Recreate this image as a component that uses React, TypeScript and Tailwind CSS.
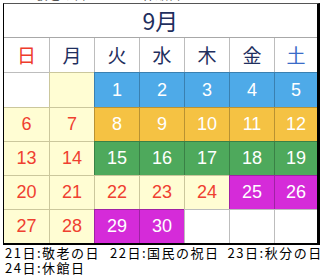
import React from "react";

type Kind = "white" | "cream" | "blue" | "orange" | "green" | "purple";

const cellStyle: Record<Kind, string> = {
  white: "bg-white text-[#ee3b2b] border-[#bdbdbd]",
  cream: "bg-[#fffdd3] text-[#ef4030] border-[#cbc79c]",
  blue: "bg-[#4eaae8] text-white border-[#3a80b0]",
  orange: "bg-[#f5c243] text-white border-[#b99232]",
  green: "bg-[#4ea95c] text-white border-[#3a8046]",
  purple: "bg-[#d52bd9] text-white border-[#a021a4]",
};

const weeks: [string, Kind][][] = [
  [["", "white"], ["", "cream"], ["1", "blue"], ["2", "blue"], ["3", "blue"], ["4", "blue"], ["5", "blue"]],
  [["6", "cream"], ["7", "cream"], ["8", "orange"], ["9", "orange"], ["10", "orange"], ["11", "orange"], ["12", "orange"]],
  [["13", "cream"], ["14", "cream"], ["15", "green"], ["16", "green"], ["17", "green"], ["18", "green"], ["19", "green"]],
  [["20", "cream"], ["21", "cream"], ["22", "cream"], ["23", "cream"], ["24", "cream"], ["25", "purple"], ["26", "purple"]],
  [["27", "cream"], ["28", "cream"], ["29", "purple"], ["30", "purple"], ["", "white"], ["", "white"], ["", "white"]],
];

const rowHeights = ["h-[35px]", "h-[34px]", "h-[34px]", "h-[34px]", "h-[34px]"];

const days = [
  { label: "日", color: "text-[#ee3b2b]" },
  { label: "月", color: "text-[#1f2f5e]" },
  { label: "火", color: "text-[#1f2f5e]" },
  { label: "水", color: "text-[#1f2f5e]" },
  { label: "木", color: "text-[#1f2f5e]" },
  { label: "金", color: "text-[#1f2f5e]" },
  { label: "土", color: "text-[#3a6cc8]" },
];

const cols = "grid grid-cols-[45px_45px_45px_45px_45px_45px_43px]";

export default function App() {
  return (
    <div className="w-[336px] h-[276px] overflow-hidden bg-white font-['Liberation_Sans','Noto_Sans_CJK_JP',sans-serif]">
      {/* cut-off caption above the table */}
      <div className="h-[3px] overflow-hidden pl-[18px]">
        <p className="-mt-[12px] text-[13px] leading-[14px] text-[#555]">
          ※ 敬老の日　　　　 休館日
        </p>
      </div>

      <div className="ml-[3px] w-[317px] border-l border-r-[3px] border-t border-b-2 border-l-black border-r-black border-b-black border-t-[#555]">
        <div className="h-[34px] flex items-center justify-center border-b border-[#a8a8a8] text-[23px] text-[#1f2f5e] font-['Noto_Sans_CJK_JP',sans-serif]">
          9月
        </div>

        <div className={`${cols} h-[34px]`}>
          {days.map((d, i) => (
            <div
              key={d.label}
              className={`flex items-center justify-center text-[19px] font-['Noto_Sans_CJK_JP',sans-serif] ${d.color} ${
                i > 0 ? "border-l border-[#bdbdbd]" : ""
              }`}
            >
              {d.label}
            </div>
          ))}
        </div>

        {weeks.map((week, r) => (
          <div key={r} className={`${cols} ${rowHeights[r]}`}>
            {week.map(([n, kind], i) => (
              <div
                key={i}
                className={`flex items-center justify-center text-[18px] border-t ${cellStyle[kind]} ${
                  i > 0 ? "border-l" : ""
                }`}
              >
                {n}
              </div>
            ))}
          </div>
        ))}
      </div>

      <div className="pl-[5px] text-[13px] leading-[15px] tracking-[1.5px] text-black font-['Noto_Sans_CJK_JP',sans-serif]">
        <p className="whitespace-nowrap">
          21日:敬老の日<span className="ml-[10px]">22日</span>:国民の祝日
          <span className="ml-[8px]">23日</span>:秋分の日
        </p>
        <p>24日:休館日</p>
      </div>
    </div>
  );
}
